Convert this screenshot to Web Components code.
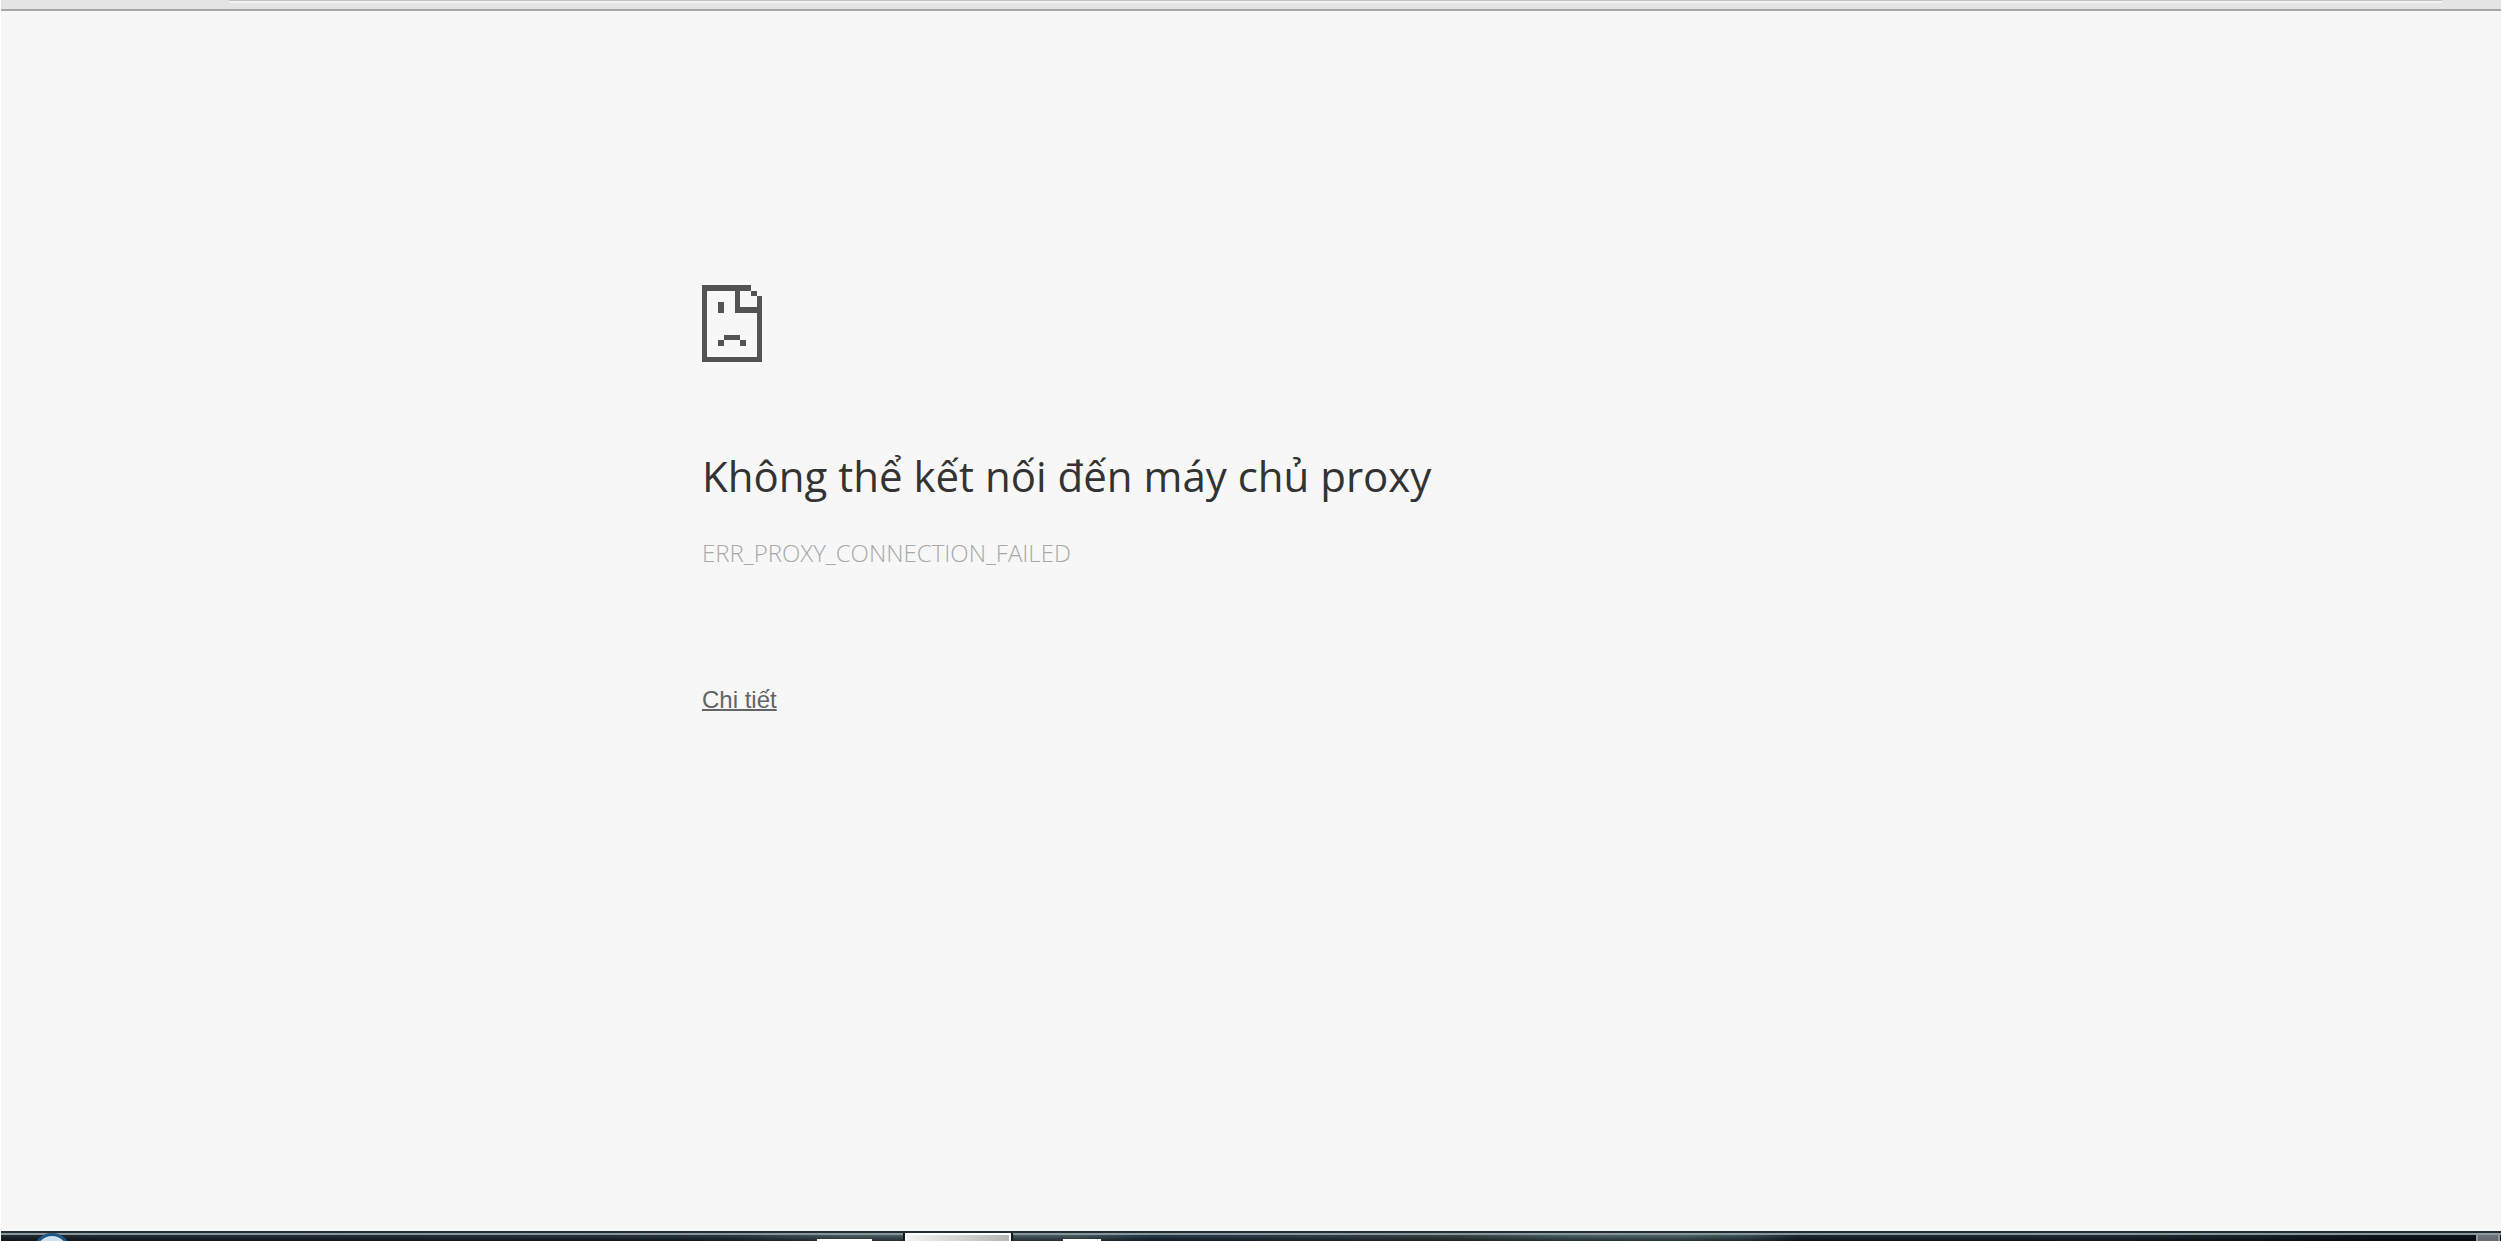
<!DOCTYPE html>
<html lang="vi">
<head>
<meta charset="utf-8">
<meta name="viewport" content="width=device-width, initial-scale=1">
<title>Không thể kết nối đến máy chủ proxy</title>
<style>
  body {
    margin: 0;
    background: #f7f7f7;
    font-family: "Open Sans", "Noto Sans", sans-serif;
  }
</style>
</head>
<body>
<error-page>
  <browser-edge slot="top"></browser-edge>
  <net-error code="ERR_PROXY_CONNECTION_FAILED">
    <sad-page slot="icon"></sad-page>
    Không thể kết nối đến máy chủ proxy
    <details-link slot="action">Chi tiết</details-link>
  </net-error>
  <task-bar slot="bottom"></task-bar>
</error-page>

<script>
class ErrorPage extends HTMLElement {
  constructor() {
    super();
    this.attachShadow({ mode: "open" });
  }

  static get styles() {
    return /* css */`
      :host {
        display: flex;
        flex-direction: column;
        min-height: 100vh;
        box-sizing: border-box;
        border-left: 1px solid #fff;
      }

      main {
        flex: 1;
      }
    `;
  }

  connectedCallback() {
    this.shadowRoot.innerHTML = /* html */`
    <style>${ErrorPage.styles}</style>
    <slot name="top"></slot>
    <main><slot></slot></main>
    <slot name="bottom"></slot>`;
  }
}

class BrowserEdge extends HTMLElement {
  constructor() {
    super();
    this.attachShadow({ mode: "open" });
  }

  static get styles() {
    return /* css */`
      :host {
        display: block;
        height: 9px;
        padding: 0 59px 0 228px;
        background: #e4e4e4;
        border-bottom: 2px solid #a8a8a8;
      }

      .toolbar {
        height: 2px;
        background: #f1f1f1;
        border-top: 1px solid #c4c4c4;
      }
    `;
  }

  connectedCallback() {
    this.shadowRoot.innerHTML = /* html */`
    <style>${BrowserEdge.styles}</style>
    <div class="toolbar"></div>`;
  }
}

class NetError extends HTMLElement {
  constructor() {
    super();
    this.attachShadow({ mode: "open" });
  }

  static get styles() {
    return /* css */`
      :host {
        display: block;
        max-width: 1098px;
        margin: 0 auto;
        padding-top: 274px;
      }

      h1 {
        margin: 84px 0 0;
        color: #333;
        font-size: 42px;
        font-weight: 400;
        line-height: 60px;
      }

      .code {
        margin: 31px 0 0;
        color: #a8a8a8;
        font-size: 24px;
        font-weight: 300;
        line-height: 32px;
      }

      .action {
        margin-top: 115px;
      }
    `;
  }

  connectedCallback() {
    this.shadowRoot.innerHTML = /* html */`
    <style>${NetError.styles}</style>
    <slot name="icon"></slot>
    <h1><slot></slot></h1>
    <p class="code">${this.getAttribute("code")}</p>
    <div class="action"><slot name="action"></slot></div>`;
  }
}

class SadPage extends HTMLElement {
  constructor() {
    super();
    this.attachShadow({ mode: "open" });
  }

  static get styles() {
    return /* css */`
      :host {
        display: block;
      }

      svg {
        display: block;
        width: 60px;
        height: 77px;
        fill: #535353;
      }
    `;
  }

  connectedCallback() {
    this.shadowRoot.innerHTML = /* html */`
    <style>${SadPage.styles}</style>
    <svg viewBox="0 0 11 14" preserveAspectRatio="none" shape-rendering="crispEdges" aria-hidden="true">
      <path d="M0 0H9V1H7V4H10V2H11V14H0ZM1 1V13H10V5H6V1Z" fill-rule="evenodd"/>
      <path d="M9 1h1v1H9zM3 3h1v2H3zM4 9h3v1H4zM3 10h1v1H3zM7 10h1v1H7z"/>
    </svg>`;
  }
}

class DetailsLink extends HTMLElement {
  constructor() {
    super();
    this.attachShadow({ mode: "open" });
  }

  static get styles() {
    return /* css */`
      :host {
        display: block;
      }

      a {
        color: #646464;
        font: 24px/32px "Liberation Sans", Arial, sans-serif;
        text-decoration: underline;
        text-decoration-thickness: 2px;
      }
    `;
  }

  connectedCallback() {
    this.shadowRoot.innerHTML = /* html */`
    <style>${DetailsLink.styles}</style>
    <a href="#details"><slot></slot></a>`;
  }
}

class TaskBar extends HTMLElement {
  constructor() {
    super();
    this.attachShadow({ mode: "open" });
  }

  static get styles() {
    return /* css */`
      :host {
        display: grid;
        grid-template-columns: 32px 38px 746px 55px 31px 110px 50px 38px 1fr 24px 1px;
        height: 8px;
        overflow: hidden;
        border-top: 2px solid #222e34;
        background:
          linear-gradient(#87959a, #87959a) 0 0 / 100% 2px no-repeat,
          linear-gradient(#0000, #0008) 0 2px / 100% 6px no-repeat,
          linear-gradient(90deg, #1f2b33 0%, #26333d 24%, #2a3843 29%, #4c5f66 34%, #4a5d64 43%,
            #26394a 46%, #34424a 54%, #3a4646 58%, #4c6468 63%, #50686a 67%, #3c5056 70%,
            #1c2832 72%, #202c34 85%, #10161f 96%, #10161f 100%);
      }

      .orb {
        grid-column: 2;
        height: 38px;
        box-sizing: border-box;
        border: 3px solid #1d5585;
        border-radius: 50%;
        background: #cfe0ee;
      }

      .icon {
        height: 2px;
        margin-top: 6px;
        background: #fff;
      }

      .first {
        grid-column: 4;
      }

      .window {
        grid-column: 6;
        border: solid #10181c;
        border-width: 0 2px;
        background: linear-gradient(90deg, #f4f4f4, #d4d4d4 50%, #b4b4b4);
        box-shadow: inset 2px 2px #fff, inset -2px 0 #fff;
      }

      .second {
        grid-column: 8;
      }

      .desktop {
        grid-column: 10;
        border: 2px solid #909a9d;
        border-bottom: 0;
        background: linear-gradient(#6d7278, #4b4c54);
      }
    `;
  }

  connectedCallback() {
    this.shadowRoot.innerHTML = /* html */`
    <style>${TaskBar.styles}</style>
    <div class="orb"></div>
    <div class="icon first"></div>
    <div class="window"></div>
    <div class="icon second"></div>
    <div class="desktop"></div>`;
  }
}

customElements.define("error-page", ErrorPage);
customElements.define("browser-edge", BrowserEdge);
customElements.define("net-error", NetError);
customElements.define("sad-page", SadPage);
customElements.define("details-link", DetailsLink);
customElements.define("task-bar", TaskBar);
</script>
</body>
</html>
